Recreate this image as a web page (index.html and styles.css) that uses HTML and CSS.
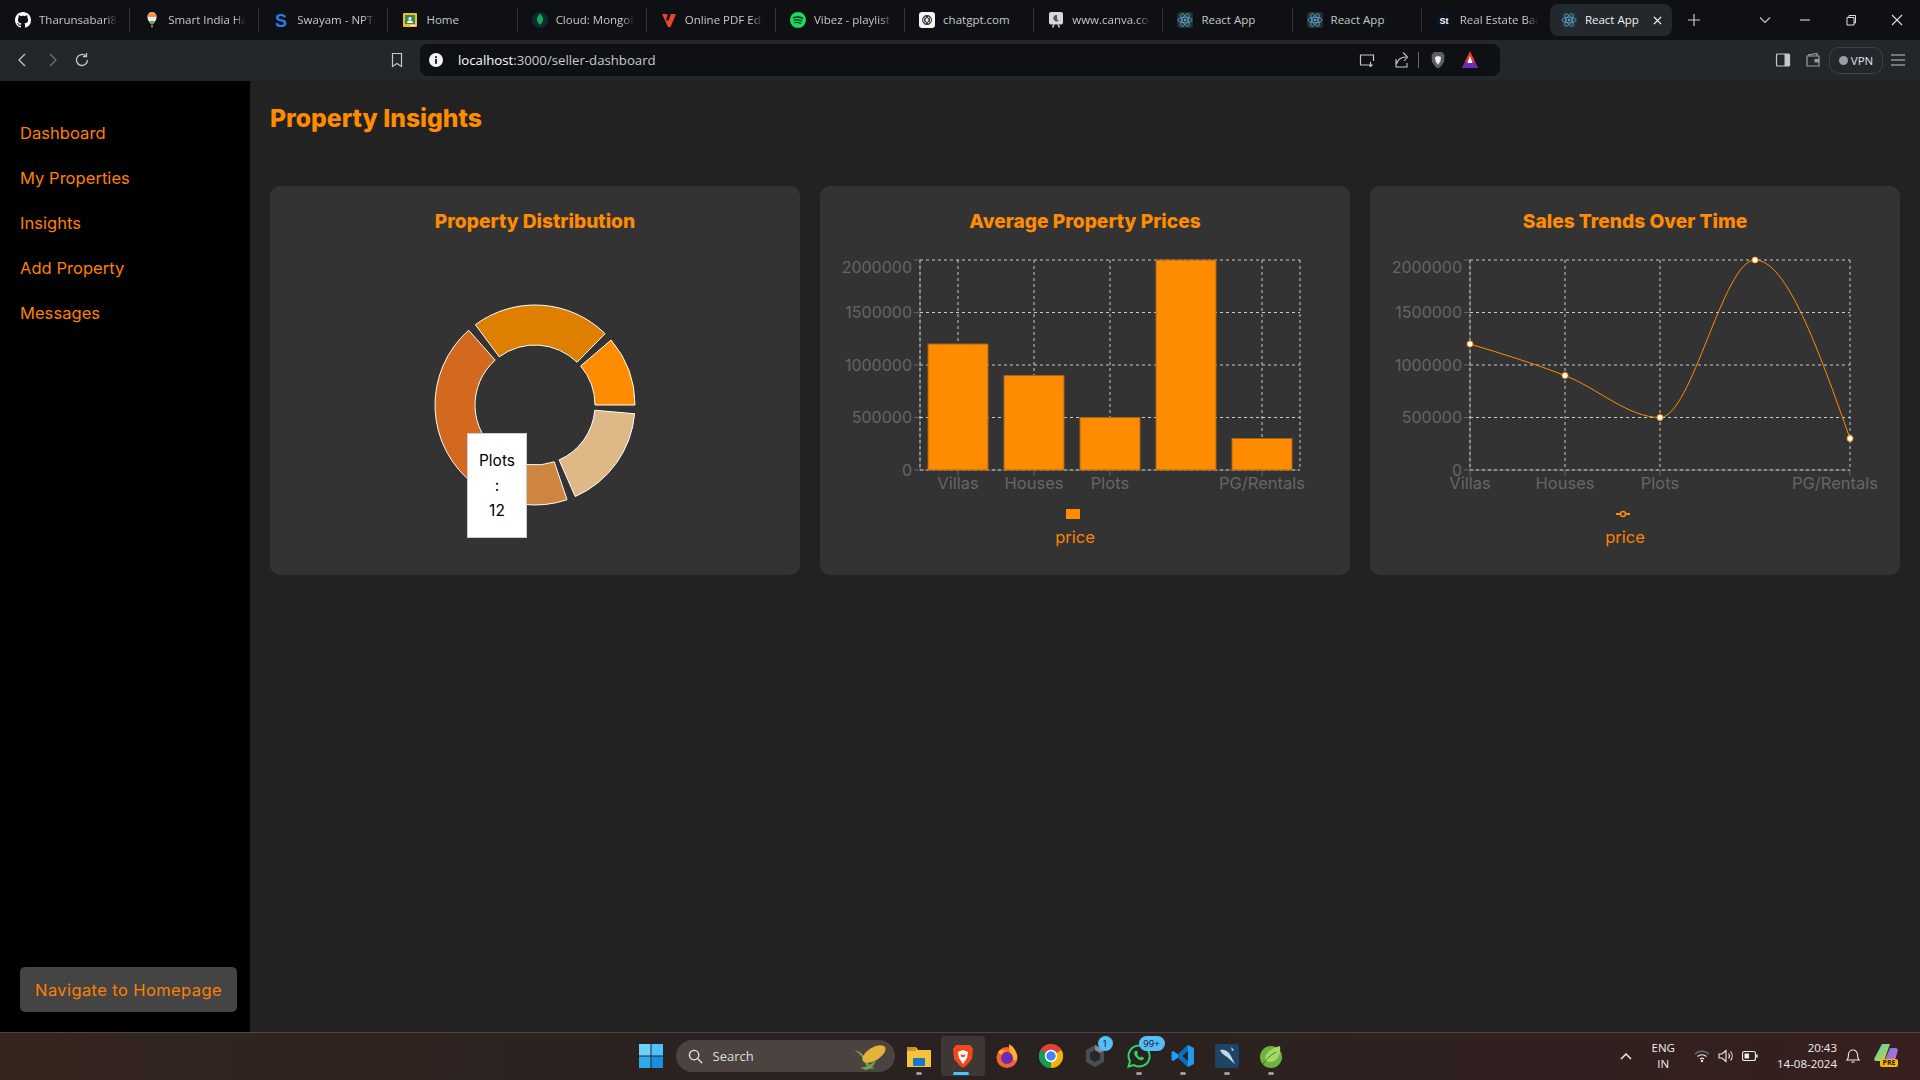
FILE: index.html
```html
<!DOCTYPE html>
<html lang="en">
<head>
<meta charset="utf-8">
<title>React App</title>
<link rel="stylesheet" href="styles.css">
</head>
<body>
<svg class="defs" width="0" height="0" aria-hidden="true">
  <defs>
    <symbol id="react" viewBox="0 0 16 16">
      <rect width="16" height="16" rx="3" fill="#22303a"/>
      <g fill="none" stroke="#61a8c4" stroke-width=".8">
        <ellipse cx="8" cy="8" rx="7" ry="2.8"/>
        <ellipse cx="8" cy="8" rx="7" ry="2.8" transform="rotate(60 8 8)"/>
        <ellipse cx="8" cy="8" rx="7" ry="2.8" transform="rotate(120 8 8)"/>
      </g>
      <circle cx="8" cy="8" r="1.3" fill="#61a8c4"/>
    </symbol>
  </defs>
</svg>

<header class="tabstrip">
  <div class="tab">
    <svg class="fav" viewBox="0 0 16 16"><path fill="#fff" d="M8 0C3.58 0 0 3.58 0 8c0 3.54 2.29 6.53 5.47 7.59.4.07.55-.17.55-.38 0-.19-.01-.82-.01-1.49-2.01.37-2.53-.49-2.69-.94-.09-.23-.48-.94-.82-1.13-.28-.15-.68-.52-.01-.53.63-.01 1.08.58 1.23.82.72 1.21 1.87.87 2.33.66.07-.52.28-.87.51-1.07-1.78-.2-3.64-.89-3.64-3.95 0-.87.31-1.59.82-2.15-.08-.2-.36-1.02.08-2.12 0 0 .67-.21 2.2.82.64-.18 1.32-.27 2-.27.68 0 1.36.09 2 .27 1.53-1.04 2.2-.82 2.2-.82.44 1.1.16 1.92.08 2.12.51.56.82 1.27.82 2.15 0 3.07-1.87 3.75-3.65 3.95.29.25.54.73.54 1.48 0 1.07-.01 1.93-.01 2.2 0 .21.15.46.55.38A8.013 8.013 0 0016 8c0-4.42-3.58-8-8-8z"/></svg>
    <span class="tab-title fade">Tharunsabari8/</span>
  </div>
  <div class="tab">
    <svg class="fav" viewBox="0 0 16 16"><path d="M8 0C5 0 3.500 2.500 3.500 5.500S6 11 7 12h2c1-1 3.500-3.500 3.500-6.500S11 0 8 0z" fill="#eee"/><path d="M8 0C5 0 3.500 2.500 3.500 5H12.500C12.500 2.500 11 0 8 0z" fill="#f0964a"/><path d="M5 9c.7 1.200 1.500 2.200 2 3h2c.5-.8 1.300-1.800 2-3z" fill="#5fae57"/><rect x="7" y="12.500" width="2" height="3" fill="#9a7a4a"/></svg>
    <span class="tab-title fade">Smart India Ha</span>
  </div>
  <div class="tab">
    <svg class="fav" viewBox="0 0 16 16"><text class="swayam-glyph" x="8" y="14.500" text-anchor="middle">S</text></svg>
    <span class="tab-title fade">Swayam - NPTE</span>
  </div>
  <div class="tab">
    <svg class="fav" viewBox="0 0 16 16"><rect x="1" y="1" width="14" height="14" rx="1" fill="#f5bd1f"/><rect x="3" y="3" width="10" height="9" fill="#2e8b57"/><circle cx="8" cy="6.500" r="1.500" fill="#fff"/><path d="M5 11c0-2 1.500-2.500 3-2.500s3 .5 3 2.500z" fill="#fff"/><rect x="9" y="13" width="4" height="1" fill="#fff"/></svg>
    <span class="tab-title">Home</span>
  </div>
  <div class="tab">
    <svg class="fav" viewBox="0 0 16 16"><circle cx="8" cy="8" r="8" fill="#0b2a33"/><path d="M8 1.500c2.600 2.800 3.400 5 3 7-.4 1.900-1.700 3.100-2.600 3.800L8 14.500l-.4-2.200C6.700 11.600 5.400 10.400 5 8.500c-.4-2 .4-4.200 3-7z" fill="#13aa52"/></svg>
    <span class="tab-title fade">Cloud: MongoD</span>
  </div>
  <div class="tab">
    <svg class="fav" viewBox="0 0 16 16"><path d="M1 2h14L9.500 15h-2.500z" fill="#e8472b"/><path d="M6.500 2h3.500L7.500 8.500H5z" fill="#1c1c1c"/></svg>
    <span class="tab-title fade">Online PDF Edit</span>
  </div>
  <div class="tab">
    <svg class="fav" viewBox="0 0 16 16"><circle cx="8" cy="8" r="8" fill="#1ed760"/><g fill="none" stroke="#10351f" stroke-linecap="round"><path d="M3.500 5.600c3-.9 6.200-.7 9 .8" stroke-width="1.500"/><path d="M4 8.200c2.600-.7 5.300-.5 7.700.8" stroke-width="1.300"/><path d="M4.500 10.700c2.100-.5 4.300-.4 6.300.7" stroke-width="1.100"/></g></svg>
    <span class="tab-title fade">Vibez - playlist</span>
  </div>
  <div class="tab">
    <svg class="fav" viewBox="0 0 16 16"><rect width="16" height="16" rx="3" fill="#f4f4f4"/><g fill="none" stroke="#333" stroke-width="1"><circle cx="8" cy="8" r="4.500"/><ellipse cx="8" cy="8" rx="4.500" ry="2" transform="rotate(60 8 8)"/><ellipse cx="8" cy="8" rx="4.500" ry="2" transform="rotate(120 8 8)"/></g></svg>
    <span class="tab-title">chatgpt.com</span>
  </div>
  <div class="tab">
    <svg class="fav" viewBox="0 0 16 16"><rect x="1" y="0" width="14" height="12.500" rx="2" fill="#d8d8d8"/><path d="M8.500 3a3.200 3.200 0 1 0 2.500 5.200L9 7.500V3.100z" fill="#555"/><path d="M5 12.500l-1 3h1.500l1-3zm6 0l1 3h-1.500l-1-3z" fill="#d8d8d8"/></svg>
    <span class="tab-title fade">www.canva.con</span>
  </div>
  <div class="tab"><svg class="fav"><use href="#react"/></svg><span class="tab-title">React App</span></div>
  <div class="tab"><svg class="fav"><use href="#react"/></svg><span class="tab-title">React App</span></div>
  <div class="tab">
    <svg class="fav" viewBox="0 0 16 16"><rect width="16" height="16" rx="2" fill="#0c1424"/><text class="st-glyph" x="8" y="11.500" text-anchor="middle">St</text></svg>
    <span class="tab-title fade">Real Estate Ban</span>
  </div>
  <div class="tab tab-active">
    <svg class="fav"><use href="#react"/></svg>
    <span class="tab-title">React App</span>
    <svg class="tab-close" viewBox="0 0 10 10"><path d="M1 1l8 8M9 1l-8 8" stroke="#fff" stroke-width="1.400"/></svg>
  </div>
  <svg class="tab-plus" viewBox="0 0 12 12"><path d="M6 0v12M0 6h12" stroke="#c8c8c8" stroke-width="1.200"/></svg>
  <div class="winctl">
    <svg class="ctl-icon ctl-chevron" viewBox="0 0 12 12"><path d="M1 3.500l5 5 5-5" fill="none" stroke="#c8c8c8" stroke-width="1.100"/></svg>
    <svg class="ctl-icon" viewBox="0 0 12 12"><path d="M1 6h10" stroke="#ddd" stroke-width="1.100"/></svg>
    <svg class="ctl-icon" viewBox="0 0 12 12"><path d="M2 3.500h7v7.500H2zM4 3.500V1.500h6.500V9H9" fill="none" stroke="#ddd" stroke-width="1"/></svg>
    <svg class="ctl-icon" viewBox="0 0 12 12"><path d="M1 1l10 10M11 1L1 11" stroke="#ddd" stroke-width="1.100"/></svg>
  </div>
</header>

<div class="toolbar">
  <svg class="tool nav-back" viewBox="0 0 16 16"><path d="M11 2L5 8l6 6" fill="none" stroke="#c4c8cc" stroke-width="1.300"/></svg>
  <svg class="tool nav-fwd" viewBox="0 0 16 16"><path d="M5 2l6 6-6 6" fill="none" stroke="#6a7075" stroke-width="1.300"/></svg>
  <svg class="tool nav-reload" viewBox="0 0 16 16"><path d="M13.500 8a5.500 5.500 0 1 1-1.700-4" fill="none" stroke="#c4c8cc" stroke-width="1.300"/><path d="M12.500 1v3.500H9" fill="none" stroke="#c4c8cc" stroke-width="1.300"/></svg>
  <svg class="tool nav-mark" viewBox="0 0 16 16"><path d="M3.500 1.500h9v13L8 11.500l-4.500 3z" fill="none" stroke="#c4c8cc" stroke-width="1.200"/></svg>
  <div class="addressbar">
    <svg class="addr-info" viewBox="0 0 14 14"><circle cx="7" cy="7" r="7" fill="#f2f2f2"/><rect x="6.100" y="6" width="1.800" height="4.800" fill="#111"/><rect x="6.100" y="3.200" width="1.800" height="1.800" fill="#111"/></svg>
    <span class="url"><b class="url-host">localhost</b>:3000/seller-dashboard</span>
    <svg class="tool addr-cast" viewBox="0 0 16 16"><path d="M9 13H1.500V3h13v6M11.500 10v4.500m-2-2l2 2 2-2" fill="none" stroke="#c4c8cc" stroke-width="1.200"/></svg>
    <svg class="tool addr-share" viewBox="0 0 18 18"><path d="M3 8v8h11v-4M3.500 13C5 8 8 6 13 6M10 1.500L14.500 6 11 10" fill="none" stroke="#c4c8cc" stroke-width="1.100"/></svg>
    <span class="addr-sep"></span>
    <svg class="tool addr-brave" viewBox="0 0 16 18"><path d="M4 1h8l2.500 3-.5 7-3.500 5L8 17.500 5.500 16 2 11l-.5-7z" fill="#5a5e66"/><path d="M5 6l3-1 3 1-.5 4L8 14l-2.500-4z" fill="#f0f0f0"/></svg>
    <svg class="tool addr-tri" viewBox="0 0 18 18"><path d="M9 0l8 17H1z" fill="#e83a2a"/><path d="M1 17l3-6h10l3 6z" fill="#6a2bb8"/><path d="M9 5l2.500 7h-5z" fill="#fff"/></svg>
  </div>
  <svg class="tool tb-side" viewBox="0 0 16 16"><rect x="1.500" y="2" width="13" height="12" rx="1" fill="none" stroke="#c4c8cc" stroke-width="1.200"/><rect x="9.500" y="2" width="5" height="12" fill="#c4c8cc"/></svg>
  <svg class="tool tb-wallet" viewBox="0 0 16 16"><path d="M3 3l9-1.500V4M2 4h12v10H2z" fill="none" stroke="#9a9ea3" stroke-width="1.200"/><rect x="9.500" y="7" width="4.500" height="3.500" fill="#9a9ea3"/></svg>
  <div class="vpn"><span class="vpn-dot"></span><span>VPN</span></div>
  <svg class="tool tb-menu" viewBox="0 0 16 16"><path d="M1 3h14M1 8h14M1 13h14" stroke="#c4c8cc" stroke-width="1.200"/></svg>
</div>

<div class="app">
  <aside class="sidebar">
    <nav class="side-nav">
      <a class="side-link">Dashboard</a>
      <a class="side-link">My Properties</a>
      <a class="side-link">Insights</a>
      <a class="side-link">Add Property</a>
      <a class="side-link">Messages</a>
    </nav>
    <button class="home-btn">Navigate to Homepage</button>
  </aside>

  <main class="main">
    <h1 class="page-title">Property Insights</h1>
    <section class="cards">
      <article class="card">
        <h2 class="card-title">Property Distribution</h2>
        <svg class="chart" viewBox="270 246 530 329">
          <g stroke="#fff" stroke-width="1">
            <path fill="#ff8c00" d="M635 405A100 100 0 0 0 611.04 340.06L580.63 366.04A60 60 0 0 1 595 405Z"/>
            <path fill="#df7f00" d="M605.09 333.67A100 100 0 0 0 475.38 324.72L499.23 356.83A60 60 0 0 1 577.05 362.2Z"/>
            <path fill="#d2691e" d="M468.61 330.22A100 100 0 0 0 474.68 484.76L498.81 452.86A60 60 0 0 1 495.17 360.13Z"/>
            <path fill="#cd853f" d="M481.86 489.71A100 100 0 0 0 567.06 499.72L554.24 461.83A60 60 0 0 1 503.12 455.83Z"/>
            <path fill="#deb887" d="M575.19 496.57A100 100 0 0 0 634.62 413.72L594.77 410.23A60 60 0 0 1 559.11 459.94Z"/>
          </g>
        </svg>
        <div class="tooltip">
          <span>Plots</span>
          <span>:</span>
          <span>12</span>
        </div>
      </article>

      <article class="card">
        <h2 class="card-title">Average Property Prices</h2>
        <svg class="chart" viewBox="820 246 530 329">
          <g class="axis-line">
            <path d="M920 260V470H1300"/>
            <path d="M914 260H920M914 312.5H920M914 365H920M914 417.5H920M914 470H920"/>
            <path d="M958 470V476M1034 470V476M1110 470V476M1262 470V476"/>
          </g>
          <g class="grid-line">
            <path d="M920 260H1300M920 312.5H1300M920 365H1300M920 417.5H1300M920 470H1300"/>
            <path d="M920 260V470M958 260V470M1034 260V470M1110 260V470M1262 260V470M1300 260V470"/>
          </g>
          <g class="bars">
            <rect x="928" y="344" width="60" height="126"/>
            <rect x="1004" y="375.500" width="60" height="94.500"/>
            <rect x="1080" y="417.500" width="60" height="52.500"/>
            <rect x="1156" y="260" width="60" height="210"/>
            <rect x="1232" y="438.500" width="60" height="31.500"/>
          </g>
          <g class="tick tick-y">
            <text x="912" y="273">2000000</text>
            <text x="912" y="318">1500000</text>
            <text x="912" y="371">1000000</text>
            <text x="912" y="423">500000</text>
            <text x="912" y="476">0</text>
          </g>
          <g class="tick tick-x">
            <text x="958" y="489">Villas</text>
            <text x="1034" y="489">Houses</text>
            <text x="1110" y="489">Plots</text>
            <text x="1262" y="489">PG/Rentals</text>
          </g>
          <rect class="legend-swatch" x="1066" y="509" width="14" height="10"/>
          <text class="legend-label" x="1075" y="543">price</text>
        </svg>
      </article>

      <article class="card">
        <h2 class="card-title">Sales Trends Over Time</h2>
        <svg class="chart" viewBox="1370 246 530 329">
          <g class="axis-line">
            <path d="M1470 260V470H1850"/>
            <path d="M1464 260H1470M1464 312.5H1470M1464 365H1470M1464 417.5H1470M1464 470H1470"/>
            <path d="M1470 470V476M1565 470V476M1660 470V476M1850 470V476"/>
          </g>
          <g class="grid-line">
            <path d="M1470 260H1850M1470 312.5H1850M1470 365H1850M1470 417.5H1850M1470 470H1850"/>
            <path d="M1470 260V470M1565 260V470M1660 260V470M1850 260V470"/>
          </g>
          <path class="trend" d="M1470 344C1501.67 353.63 1533.33 363.25 1565 375.5C1596.67 387.75 1628.33 417.5 1660 417.5C1691.67 417.5 1723.33 260 1755 260C1786.67 260 1818.33 349.24 1850 438.5"/>
          <g class="dots">
            <circle cx="1470" cy="344" r="3"/>
            <circle cx="1565" cy="375.500" r="3"/>
            <circle cx="1660" cy="417.500" r="3"/>
            <circle cx="1755" cy="260" r="3"/>
            <circle cx="1850" cy="438.500" r="3"/>
          </g>
          <g class="tick tick-y">
            <text x="1462" y="273">2000000</text>
            <text x="1462" y="318">1500000</text>
            <text x="1462" y="371">1000000</text>
            <text x="1462" y="423">500000</text>
            <text x="1462" y="476">0</text>
          </g>
          <g class="tick tick-x">
            <text x="1470" y="489">Villas</text>
            <text x="1565" y="489">Houses</text>
            <text x="1660" y="489">Plots</text>
            <text x="1835" y="489">PG/Rentals</text>
          </g>
          <path class="legend-line" d="M1616 514H1630"/>
          <circle class="legend-dot" cx="1623" cy="514" r="2.500"/>
          <text class="legend-label" x="1625" y="543">price</text>
        </svg>
      </article>
    </section>
  </main>
</div>

<footer class="taskbar">
  <div class="task-left"></div>
  <div class="task-center">
    <svg class="task-icon" viewBox="0 0 24 24"><g fill="#4cc2ff"><rect x="0" y="0" width="11.500" height="11.500" fill="#6fd0ff"/><rect x="12.500" y="0" width="11.500" height="11.500" fill="#4cc2ff"/><rect x="0" y="12.500" width="11.500" height="11.500" fill="#2ea8ee"/><rect x="12.500" y="12.500" width="11.500" height="11.500" fill="#1a8fdf"/></g></svg>
    <div class="task-search">
      <svg class="search-icon" viewBox="0 0 16 16"><circle cx="6.500" cy="6.500" r="5" fill="none" stroke="#e8e8e8" stroke-width="1.400"/><path d="M10.200 10.200L15 15" stroke="#e8e8e8" stroke-width="1.400"/></svg>
      <span class="search-text">Search</span>
      <svg class="search-art" viewBox="0 0 36 28"><path d="M2 8c6 3 9 8 12 15 2 3 5 4 9 4-4-2-7-5-8-8-3-7-8-10-13-11z" fill="#6ea24a"/><ellipse cx="22" cy="12" rx="13" ry="6.500" transform="rotate(-32 22 12)" fill="#e2b23a"/><path d="M8 26c6-1 12-4 16-8-1 5-5 9-10 10z" fill="#6ea24a"/></svg>
    </div>
    <div class="task-item">
      <svg class="task-icon" viewBox="0 0 24 24"><path d="M0 3h9l2 3h13v17H0z" fill="#f5c33b"/><rect y="3" width="9" height="4" fill="#c9922b"/><rect x="6" y="14" width="12" height="8" rx="1" fill="#1677c9"/></svg>
      <span class="run-dot"></span>
    </div>
    <div class="task-item task-active">
      <svg class="task-icon" viewBox="0 0 24 24"><path d="M5 1h14l3 4-1 10-5 6-4 3-4-3-5-6L2 5z" fill="#f2481e"/><path d="M7 8l5-2 5 2-1 6-4 6-4-6z" fill="#fff"/><path d="M9.500 10l2.500 1 2.500-1-1 3h-3z" fill="#f2481e"/></svg>
      <span class="run-bar"></span>
    </div>
    <div class="task-item">
      <svg class="task-icon" viewBox="0 0 24 24"><circle cx="12" cy="13.500" r="10.500" fill="#f7642b"/><path d="M14 0c5 3 8 8 8 13s-2 4-4 2-4-9-4-15z" fill="#ffb12b"/><circle cx="12" cy="14" r="6" fill="#6b2bb8"/><path d="M3 8c2-2 6-3 8-1-3 0-4 2-4 4z" fill="#ffb12b"/></svg>
    </div>
    <div class="task-item">
      <svg class="task-icon" viewBox="0 0 24 24"><circle cx="12" cy="12" r="12" fill="#db4437"/><path d="M12 12L1.600 6A12 12 0 0 0 12 24z" fill="#0f9d58"/><path d="M12 12v12A12 12 0 0 0 22.400 6z" fill="#f4b400"/><path d="M1.600 6A12 12 0 0 1 22.400 6H12z" fill="#db4437"/><circle cx="12" cy="12" r="5.500" fill="#4285f4" stroke="#fff" stroke-width="1.500"/></svg>
    </div>
    <div class="task-item">
      <svg class="task-icon" viewBox="0 0 24 24"><path d="M12 1l9 5v12l-9 5-9-5V6z" fill="#4a4e54"/><path d="M12 6l5 3v6l-5 3-5-3V9z" fill="#24262a"/><path d="M12 1l9 5-4 3-5-3z" fill="#8a8e94"/></svg>
      <span class="badge badge-one">1</span>
    </div>
    <div class="task-item">
      <svg class="task-icon" viewBox="0 0 24 24"><path d="M12 1.500a10.500 10.500 0 0 0-9 15.800L1.500 22.500l5.400-1.400A10.500 10.500 0 1 0 12 1.500z" fill="none" stroke="#2fd366" stroke-width="2"/><path d="M8 7c-1 1-1.500 3 .5 5.500s5 4.500 7 3.500 1.500-2 1-2.500l-2-1-1 1c-1.500-.5-3-2-3.500-3.500l1-1-1-2.200z" fill="#2fd366"/></svg>
      <span class="badge badge-many">99+</span>
      <span class="run-dot"></span>
    </div>
    <div class="task-item">
      <svg class="task-icon" viewBox="0 0 24 24"><path d="M17 1l6 3v16l-6 3L7 13.500 2.500 17 .5 16V8l2-1L7 10.500z" fill="#1f9cf0"/><path d="M17 1v22L7 13.500V10.500z" fill="#0a6fc2"/><path d="M17 7v10l-6-5z" fill="#2b2320"/></svg>
      <span class="run-dot"></span>
    </div>
    <div class="task-item">
      <svg class="task-icon" viewBox="0 0 24 24"><rect width="24" height="24" rx="3" fill="#1e4466"/><path d="M5 6c5-1 9 2 11 6s3 6 4 8c-3-2-5-5-8-7S6 9 5 6z" fill="#c8d4de"/><path d="M16 3l3 3-2 1z" fill="#c8d4de"/></svg>
      <span class="run-dot"></span>
    </div>
    <div class="task-item">
      <svg class="task-icon" viewBox="0 0 24 24"><circle cx="12" cy="13" r="11" fill="#6db33f"/><path d="M21 2c1 8-2 15-9 16-3 .3-5-1-6-2 0-6 4-11 15-14z" fill="#a5d86a"/><path d="M4 20C8 14 12 11 17 8" stroke="#3e7a1f" fill="none"/></svg>
      <span class="run-dot"></span>
    </div>
  </div>
  <div class="task-right">
    <svg class="tray-chev" viewBox="0 0 12 8"><path d="M1 7l5-5 5 5" fill="none" stroke="#eee" stroke-width="1.500"/></svg>
    <div class="tray-lang"><span>ENG</span><span>IN</span></div>
    <svg class="tray-icon" viewBox="0 0 16 16"><path d="M1 6a10 10 0 0 1 14 0" fill="none" stroke="#777" stroke-width="1.100"/><path d="M3.500 8.500a6.500 6.500 0 0 1 9 0M6 11a3 3 0 0 1 4 0" fill="none" stroke="#eee" stroke-width="1.100"/><circle cx="8" cy="13" r="1.200" fill="#eee"/></svg>
    <svg class="tray-icon" viewBox="0 0 16 16"><path d="M1 6h3l4-3.500v11L4 10H1z" fill="none" stroke="#eee" stroke-width="1.100"/><path d="M10.500 5.500a4 4 0 0 1 0 5M12.500 3.500a7 7 0 0 1 0 9" fill="none" stroke="#eee" stroke-width="1.100"/></svg>
    <svg class="tray-icon" viewBox="0 0 16 16"><rect x=".5" y="3.500" width="13" height="9" rx="2" fill="none" stroke="#eee" stroke-width="1.100"/><rect x="2.500" y="5.500" width="4.500" height="5" fill="#eee"/><rect x="14.200" y="6.500" width="1.500" height="3" fill="#eee"/></svg>
    <div class="tray-clock"><span>20:43</span><span>14-08-2024</span></div>
    <svg class="tray-icon tray-bell" viewBox="0 0 16 16"><path d="M2 12c1.500-1.500 1.500-3 1.500-5.500a4.500 4.500 0 0 1 9 0c0 2.500 0 4 1.500 5.500z" fill="none" stroke="#eee" stroke-width="1.100"/><path d="M6.500 14h3" stroke="#eee" stroke-width="1.100"/></svg>
    <div class="copilot">
      <svg class="copilot-art" viewBox="0 0 24 20"><defs><linearGradient id="cpa" x1="0" y1="0" x2="1" y2="1"><stop offset="0" stop-color="#3fd1c2"/><stop offset="1" stop-color="#e5d02a"/></linearGradient><linearGradient id="cpb" x1="0" y1="0" x2="1" y2="1"><stop offset="0" stop-color="#4a8bf0"/><stop offset="1" stop-color="#e85ac8"/></linearGradient></defs><path d="M8 0h8l-6 17H2c-2 0-2-2-1.500-3z" fill="url(#cpa)"/><path d="M16 4h5c3 0 3 2 2.500 4L21 16c-.5 2-2 2-4 2h-7z" fill="url(#cpb)"/></svg>
      <span class="pre-badge">PRE</span>
    </div>
  </div>
</footer>
</body>
</html>
```

FILE: styles.css
```css
* { box-sizing: border-box; }

html, body {
  margin: 0;
  width: 1920px;
  height: 1080px;
  overflow: hidden;
}

body {
  display: flex;
  flex-direction: column;
  background: #222;
  font-family: "Inter", "Noto Sans", sans-serif;
}

.defs { display: block; height: 0; }

/* Browser tabs */
.tabstrip {
  display: flex;
  align-items: center;
  flex: 0 0 40px;
  padding-left: 1px;
  background: #0e1014;
  font-family: "Open Sans", "Noto Sans", sans-serif;
  color: #c6c8ca;
  font-size: 11.500px;
}

.tab {
  flex: 0 0 129.170px;
  height: 24px;
  display: flex;
  align-items: center;
  gap: 8px;
  padding-left: 14px;
  border-right: 1px solid #33373b;
}

.tab:nth-child(12) { border-right: 0; }

.fav { flex: 0 0 16px; width: 16px; height: 16px; }

.tab-title { white-space: nowrap; overflow: hidden; width: 78px; flex: 0 0 78px; padding-bottom: 2px; }

.tab-title.fade {
  -webkit-mask-image: linear-gradient(90deg, #000 85%, transparent);
  mask-image: linear-gradient(90deg, #000 85%, transparent);
}

.tab-active {
  flex: 0 0 122px;
  height: 32px;
  margin-left: -1px;
  padding-left: 11px;
  background: #23282c;
  border-radius: 8px;
  border-right: 0;
  color: #f2f2f2;
  gap: 8px;
}

.tab-active .tab-title { width: 56px; flex: 0 0 56px; }

.tab-close { width: 9px; height: 9px; margin-left: 4px; }

.tab-plus { width: 12px; height: 12px; margin-left: 16px; }

.winctl {
  margin-left: auto;
  display: flex;
  align-items: center;
  gap: 34px;
  padding-right: 17px;
}

.ctl-icon { width: 12px; height: 12px; }
.ctl-chevron { margin-right: -6px; }

.swayam-glyph { font: 700 18px "Liberation Sans", sans-serif; fill: #2a7de1; }
.st-glyph { font: 700 9px "Liberation Sans", sans-serif; fill: #fff; }

/* Browser toolbar */
.toolbar {
  flex: 0 0 41px;
  display: flex;
  align-items: center;
  background: #22272b;
  padding-bottom: 1px;
}

.tool { width: 16px; height: 16px; flex: 0 0 auto; }

.nav-back { margin-left: 14px; }
.nav-fwd { margin-left: 15px; }
.nav-reload { margin-left: 13px; }
.nav-mark { margin-left: 299px; }

.addressbar {
  width: 1080px;
  height: 32px;
  margin-left: 15px;
  background: #0e1014;
  border-radius: 8px;
  display: flex;
  align-items: center;
  padding-left: 9px;
}

.addr-info { width: 14px; height: 14px; }

.url {
  margin-left: 15px;
  font-family: "Open Sans", "Noto Sans", sans-serif;
  font-size: 13.200px;
  color: #c8cacc;
}

.url-host { font-weight: 400; color: #fff; }

.addr-cast { margin-left: 703px; }
.addr-share { margin-left: 18px; width: 18px; height: 18px; }
.addr-sep { width: 1px; height: 16px; background: #666; margin-left: 7px; }
.addr-brave { margin-left: 11px; height: 18px; }
.addr-tri { margin-left: 15px; width: 18px; height: 18px; }

.tb-side { margin-left: 275px; }
.tb-wallet { margin-left: 14px; }

.vpn {
  margin-left: 8px;
  width: 54px;
  height: 27px;
  border: 1px solid #3c4247;
  border-radius: 10px;
  display: flex;
  align-items: center;
  justify-content: center;
  gap: 3px;
  font: 11.500px "Open Sans", "Noto Sans", sans-serif;
  color: #e0e2e4;
}

.vpn-dot { width: 9px; height: 9px; border-radius: 50%; background: #9a9ea3; }

.tb-menu { margin-left: 7px; }

/* App */
.app { flex: 1 1 0; display: flex; min-height: 0; }

.sidebar {
  flex: 0 0 250px;
  background: #000;
  display: flex;
  flex-direction: column;
  justify-content: space-between;
  padding: 30px 13px 20px 20px;
}

.side-nav { display: flex; flex-direction: column; }

.side-link {
  height: 45px;
  line-height: 45px;
  font-size: 16.500px;
  color: #ff8000;
  letter-spacing: .05px;
}

.home-btn {
  height: 45px;
  border: 0;
  border-radius: 5px;
  background: #444;
  color: #ff8000;
  font-family: inherit;
  font-size: 16.500px;
  letter-spacing: .4px;
  padding: 0;
}

.main { flex: 1 1 0; padding: 20px; background: #222; }

.page-title {
  margin: 0 0 51px;
  height: 34px;
  line-height: 34px;
  font-size: 24.700px;
  font-weight: 800;
  color: #ff8c00;
}

.cards {
  display: grid;
  grid-template-columns: repeat(3, 530px);
  gap: 20px;
}

.card {
  position: relative;
  height: 389px;
  background: #333;
  border-radius: 10px;
  padding-top: 20px;
}

.card-title {
  margin: 0 0 10px;
  height: 30px;
  line-height: 30px;
  text-align: center;
  font-size: 19.200px;
  font-weight: 800;
  color: #ff8c00;
}

.chart { display: block; width: 530px; height: 329px; }

.tooltip {
  position: absolute;
  left: 197px;
  top: 247px;
  width: 60px;
  height: 105px;
  background: #fff;
  border: 1px solid #ccc;
  padding-top: 14px;
  display: flex;
  flex-direction: column;
  align-items: center;
  color: #000;
  font-size: 15.500px;
  line-height: 25px;
}

.axis-line path { fill: none; stroke: #666; }

.grid-line path { fill: none; stroke: #ccc; stroke-dasharray: 3 3; }

.bars rect { fill: #ff8c00; stroke: #a8651a; }

.tick text { font-size: 16px; fill: #666; }
.tick-y text { text-anchor: end; }
.tick-x text { text-anchor: middle; font-size: 16.500px; }

.legend-swatch { fill: #ff8c00; }
.legend-label { font-size: 16.500px; fill: #ff8000; text-anchor: middle; }

.trend { fill: none; stroke: #ff8c00; stroke-width: 1; }
.dots circle { fill: #fff; stroke: #ff8c00; stroke-width: 1; }

.legend-line { stroke: #ff8c00; stroke-width: 2; }
.legend-dot { fill: #333; stroke: #ff8c00; stroke-width: 1.500; }

/* Windows taskbar */
.taskbar {
  flex: 0 0 48px;
  display: grid;
  grid-template-columns: 1fr auto 1fr;
  align-items: center;
  padding-bottom: 1px;
  background: linear-gradient(90deg, #35251f 0%, #2a2220 35%, #2a2220 60%, #371f1f 100%);
  border-top: 1px solid #4a4644;
  font-family: "Open Sans", "Noto Sans", sans-serif;
  color: #f0f0f0;
}

.task-center { display: flex; align-items: center; margin-left: 11px; }

.task-icon { width: 24px; height: 24px; display: block; }

.task-center > .task-icon { margin-right: 13px; }

.task-search {
  width: 219px;
  height: 32px;
  border-radius: 16px;
  background: #4b4340;
  display: flex;
  align-items: center;
  padding-left: 12px;
  margin-right: 2px;
}

.search-icon { width: 15px; height: 15px; }
.search-text { font-size: 13px; color: #dedede; margin-left: 10px; }
.search-art { width: 38px; height: 28px; margin-left: auto; margin-right: 6px; }

.task-item {
  position: relative;
  width: 44px;
  height: 40px;
  display: flex;
  align-items: center;
  justify-content: center;
  border-radius: 4px;
}

.task-active { background: #3d3735; }

.run-dot {
  position: absolute;
  left: 19px;
  bottom: 1px;
  width: 6px;
  height: 3px;
  border-radius: 2px;
  background: #9a9a9a;
}

.run-bar {
  position: absolute;
  left: 12px;
  bottom: 1px;
  width: 16px;
  height: 3px;
  border-radius: 2px;
  background: #4cc2ff;
}

.badge {
  position: absolute;
  top: 0;
  border-radius: 9px;
  background: #56bdf5;
  color: #111;
  font-size: 9.500px;
  line-height: 15px;
  height: 15px;
  text-align: center;
}

.badge-one { left: 25px; width: 15px; }
.badge-many { left: 22px; width: 26px; }

.task-right {
  display: flex;
  align-items: center;
  justify-content: flex-end;
  padding-right: 22px;
}

.tray-chev { width: 12px; height: 8px; margin-right: 20px; }

.tray-lang {
  display: flex;
  flex-direction: column;
  align-items: center;
  font-size: 11.500px;
  line-height: 16px;
  margin-right: 19px;
}

.tray-icon { width: 16px; height: 16px; margin-right: 8px; }

.tray-clock {
  display: flex;
  flex-direction: column;
  align-items: flex-end;
  font-size: 11.500px;
  line-height: 16px;
  margin-left: 11px;
}

.tray-bell { margin: 0 0 0 8px; }

.copilot { position: relative; width: 24px; height: 24px; margin-left: 13px; }
.copilot-art { width: 24px; height: 20px; display: block; }

.pre-badge {
  position: absolute;
  left: 6px;
  top: 15px;
  width: 18px;
  height: 8px;
  background: #f5b900;
  border-radius: 2px;
  color: #222;
  font-size: 7px;
  font-weight: 700;
  line-height: 8px;
  text-align: center;
}
```
